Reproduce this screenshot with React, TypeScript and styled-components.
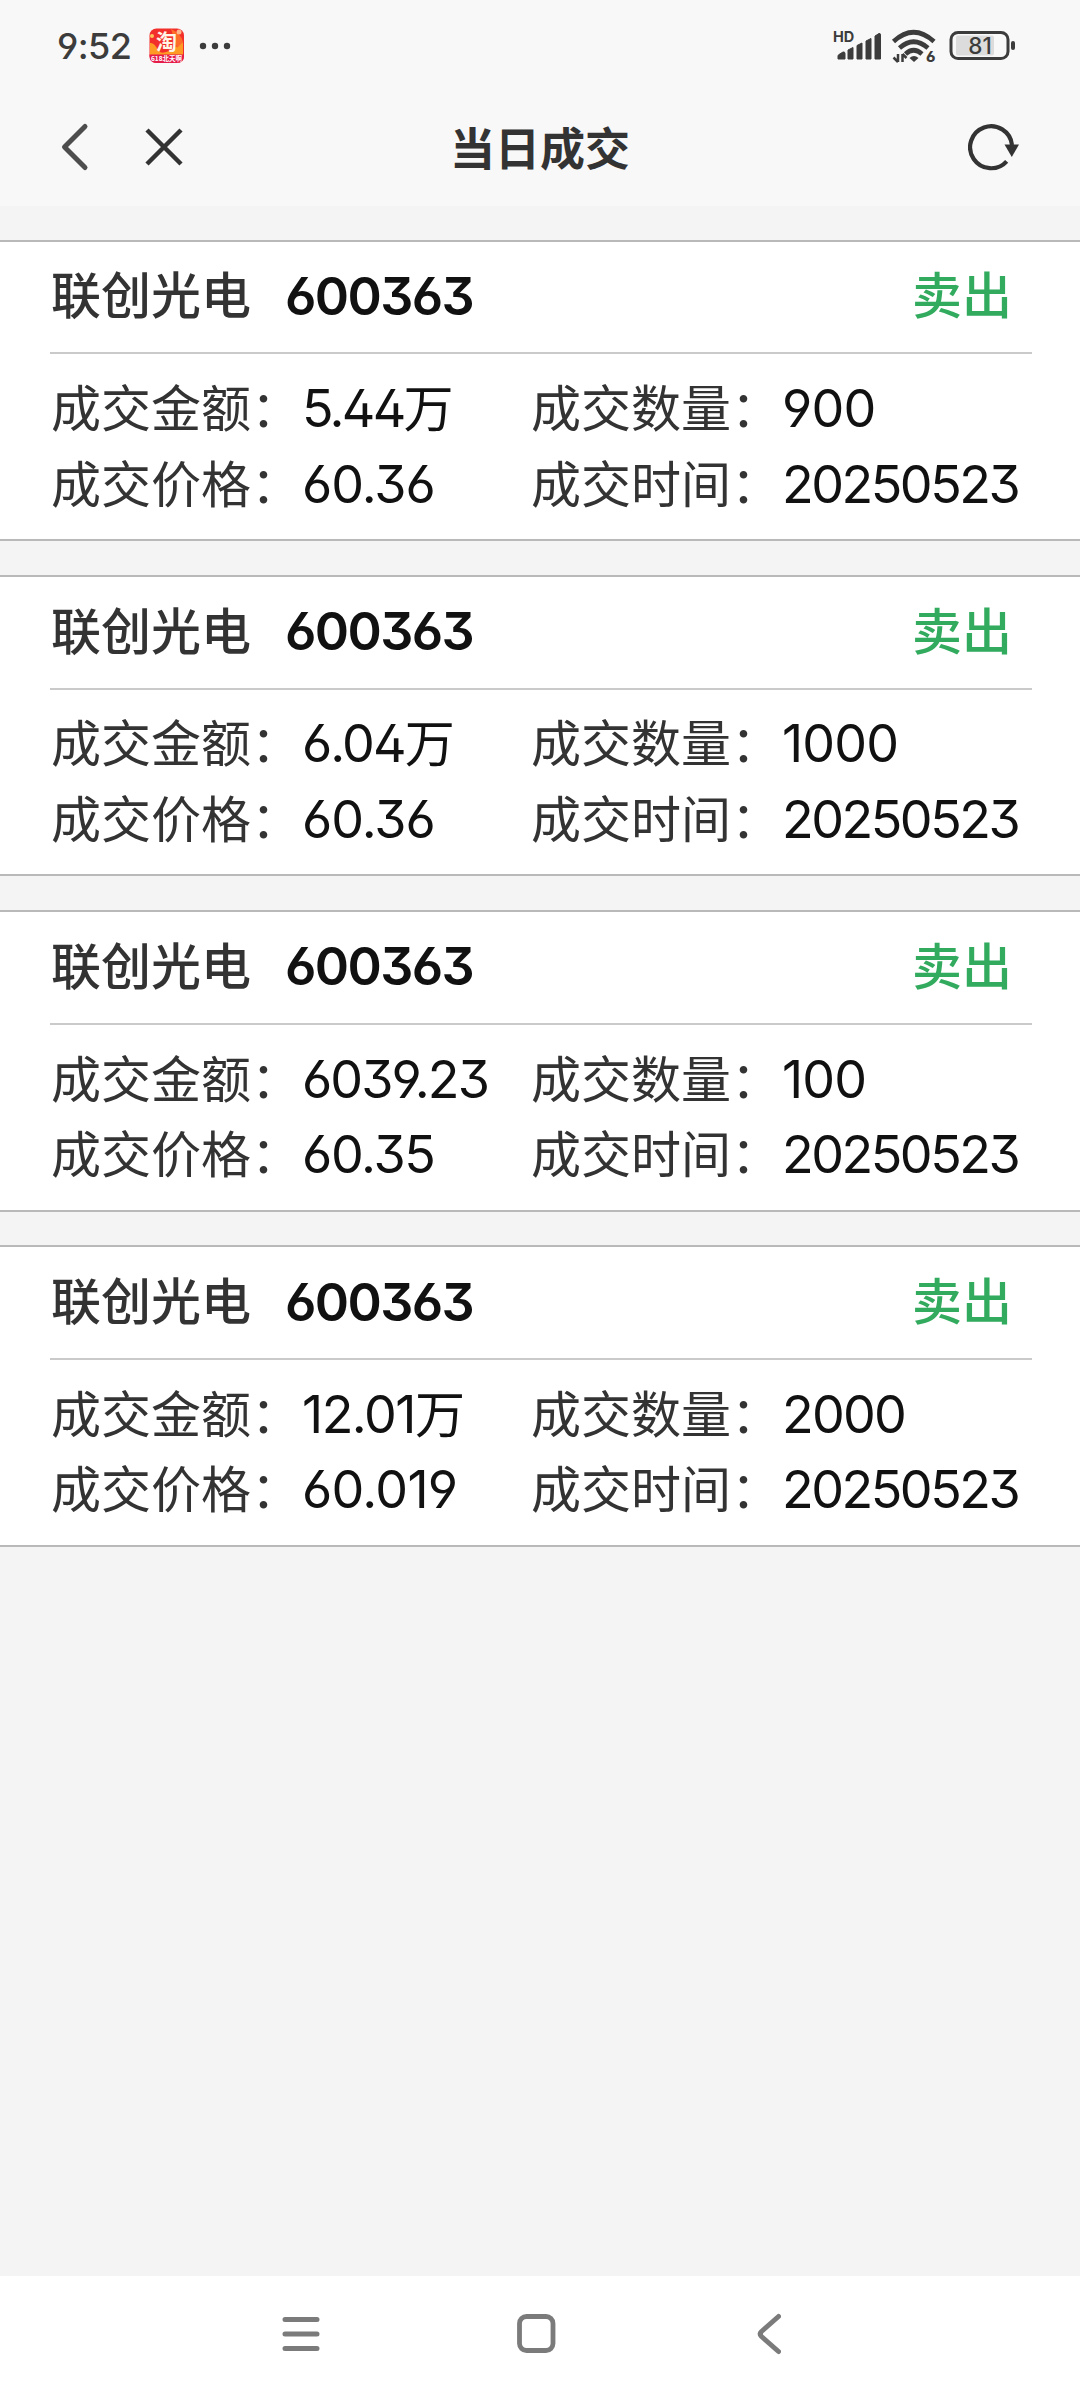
import React from "react";
import styled, { createGlobalStyle } from "styled-components";

const CJK = '"Noto Sans CJK SC", sans-serif';

const GlobalStyle = createGlobalStyle`
  * { box-sizing: border-box; }
  body { margin: 0; background: #f4f4f4; font-family: Inter, ${CJK}; }
`;

const Screen = styled.div`
  width: 1080px;
  height: 2400px;
  display: flex;
  flex-direction: column;
  background: #f4f4f4;
  overflow: hidden;
`;

const StatusBar = styled.div`
  height: 92px;
  padding: 0 64px 0 57px;
  display: flex;
  align-items: center;
  justify-content: space-between;
  background: #f8f8f8;
  color: #3c3c3c;
`;

const StatusGroup = styled.div`
  display: flex;
  align-items: center;
`;

const Clock = styled.span`
  width: 76px;
  font: 500 36px/44px Inter, sans-serif;
  font-feature-settings: "cv04", "ss01";
  letter-spacing: -0.6px;
  white-space: nowrap;
`;

const AppBadge = styled.svg`
  display: block;
  margin-left: 16px;
  overflow: visible;
`;

const Dots = styled.svg`
  display: block;
  margin-left: 14px;
`;

const Signals = styled.svg`
  display: block;
  overflow: visible;
  font-feature-settings: "cv03", "ss01";
`;

const TitleBar = styled.div`
  height: 113.6px;
  padding: 0 56px 3px 54px;
  display: grid;
  grid-template-columns: 1fr auto 1fr;
  align-items: center;
  background: #f8f8f8;
`;

const Actions = styled.div<{ $end?: boolean }>`
  display: flex;
  align-items: center;
  justify-content: ${(p) => (p.$end ? "flex-end" : "flex-start")};
  gap: 50px;
`;

const Title = styled.h1`
  margin: 0;
  padding-left: 2px;
  font: 700 45px/60px ${CJK};
  color: #333;
`;

const List = styled.main`
  flex: 1;
  padding-top: 34px;
  display: flex;
  flex-direction: column;
  gap: 33.5px;
`;

const Card = styled.section`
  height: 301.7px;
  padding: 0 48px 0 50px;
  border-top: 2px solid #b9b9b9;
  border-bottom: 2px solid #b9b9b9;
  background: #fff;
`;

const CardHead = styled.header`
  height: 112.8px;
  padding: 0 20px 0 1px;
  display: flex;
  align-items: center;
  border-bottom: 2px solid #cacaca;
`;

const StockName = styled.span`
  width: 234px;
  padding-bottom: 9px;
  font: 500 50px/72px ${CJK};
  color: #333;
`;

const digits = `
  font-feature-settings: "cv03", "cv04", "cv09", "ss01";
  color: #111;
  white-space: nowrap;
`;

const StockCode = styled.span`
  font: 600 52px/72px Inter, ${CJK};
  letter-spacing: -1.6px;
  ${digits}
`;

const Side = styled.span`
  margin-left: auto;
  padding-bottom: 9px;
  font: 500 50px/72px ${CJK};
  color: #33ab5f;
`;

const Fields = styled.div`
  padding: 17px 0 0 1px;
  display: grid;
  grid-template-columns: 480px 1fr;
  grid-auto-rows: 75.5px;
  align-items: center;
`;

const Field = styled.div`
  display: flex;
  align-items: center;
  height: 72px;
`;

const Label = styled.span`
  width: 251px;
  padding-bottom: 8px;
  font: 400 50px/72px ${CJK};
  color: #333;
  white-space: nowrap;
`;

const Value = styled.span<{ $tracking: number }>`
  display: flex;
  align-items: center;
  font: 400 52px/72px Inter, ${CJK};
  letter-spacing: ${(p) => p.$tracking}px;
  ${digits}
`;

const Unit = styled.span`
  padding-bottom: 8px;
  font: 400 50px/72px ${CJK};
`;

const NavBar = styled.nav`
  height: 124px;
  padding: 0 299px 8px 280px;
  display: flex;
  align-items: center;
  justify-content: space-between;
  background: #fff;
`;

interface Figure {
  text: string;
  unit?: string;
  tracking: number;
}

interface Deal {
  amount: Figure;
  count: Figure;
  price: Figure;
}

const deals: Deal[] = [
  {
    amount: { text: "5.44", unit: "万", tracking: -2.7 },
    count: { text: "900", tracking: -0.8 },
    price: { text: "60.36", tracking: -1 },
  },
  {
    amount: { text: "6.04", unit: "万", tracking: -1.9 },
    count: { text: "1000", tracking: -0.8 },
    price: { text: "60.36", tracking: -1 },
  },
  {
    amount: { text: "6039.23", tracking: -1.9 },
    count: { text: "100", tracking: -0.8 },
    price: { text: "60.35", tracking: -1.3 },
  },
  {
    amount: { text: "12.01", unit: "万", tracking: -1.5 },
    count: { text: "2000", tracking: -1.8 },
    price: { text: "60.019", tracking: -0.7 },
  },
];

const tradeDate: Figure = { text: "20250523", tracking: -2.5 };

const DealField = ({ label, figure }: { label: string; figure: Figure }) => (
  <Field>
    <Label>{label}：</Label>
    <Value $tracking={figure.tracking}>
      {figure.text}
      {figure.unit && <Unit>{figure.unit}</Unit>}
    </Value>
  </Field>
);

const DealCard = ({ deal }: { deal: Deal }) => (
  <Card>
    <CardHead>
      <StockName>联创光电</StockName>
      <StockCode>600363</StockCode>
      <Side>卖出</Side>
    </CardHead>
    <Fields>
      <DealField label="成交金额" figure={deal.amount} />
      <DealField label="成交数量" figure={deal.count} />
      <DealField label="成交价格" figure={deal.price} />
      <DealField label="成交时间" figure={tradeDate} />
    </Fields>
  </Card>
);

const StatusIcons = () => (
  <Signals width="184" height="36" viewBox="832 28 184 36" fill="#3c3c3c">
    <text x="833" y="42" fontFamily="Inter, sans-serif" fontWeight="700" fontSize="14.5">HD</text>
    <path d="M838 59v-3q0-1 1-1.500l4-2.500q2-.5 2 1.500V59zM848 59V50l5-2.500V59zM857 59V45.500l5-2.500V59zM866 59V41l5-2.500V59zM875 59V36l4-2.500q1.500-.5 1.500 1.500V59z" strokeWidth="1" stroke="#3c3c3c" strokeLinejoin="round" />
    <g fill="none" stroke="#3c3c3c" strokeWidth="4.600">
      <path d="M893.500 41.500Q913.500 23 934 41.500" />
      <path d="M899.500 48Q913.500 35.500 928 48" />
      <path d="M905.500 54Q913.500 46.500 922 54" />
    </g>
    <path d="M909.500 58Q914 54 918.500 58L914 62z" />
    <path d="M898 54v8M898 62l-4.500-4.500M902.500 62v-8M902.500 54l4 4" fill="none" stroke="#3c3c3c" strokeWidth="2.500" />
    <text x="926" y="61.800" fontFamily="Inter, sans-serif" fontWeight="800" fontSize="15">6</text>
    <rect x="956" y="35.500" width="38" height="20" rx="2" fill="#dcdcdc" />
    <rect x="951" y="32.500" width="57" height="26" rx="7" fill="none" stroke="#3c3c3c" strokeWidth="3" />
    <rect x="1011" y="41" width="4" height="9" rx="2" />
    <text x="980" y="53.800" textAnchor="middle" fontFamily="Inter, sans-serif" fontWeight="500" fontSize="22.500">81</text>
  </Signals>
);

export default function App() {
  return (
    <Screen>
      <GlobalStyle />
      <StatusBar>
        <StatusGroup>
          <Clock>9:52</Clock>
          <AppBadge width="36" height="36" viewBox="0 0 36 36">
            <rect x="0.500" y="0.500" width="34.500" height="34.500" rx="7" fill="#f22f2b" />
            <path d="M1 15Q5 14 9 22T34 14V27H1z" fill="#ff9a24" />
            <path d="M22 1Q32 5 34 14L28 20z" fill="#ff6b28" />
            <path d="M.5 26.500H35V28q0 7-7 7H7.500q-7 0-7-7z" fill="#e51b4a" />
            <circle cx="30" cy="4" r="2.500" fill="#ffb48a" />
            <circle cx="3" cy="8" r="2" fill="#ffc35b" />
            <text x="17.500" y="21" textAnchor="middle" fontFamily={CJK} fontWeight="700" fontSize="21" fill="#fff6e8">淘</text>
            <text x="17.500" y="32.800" textAnchor="middle" fontFamily={CJK} fontWeight="700" fontSize="6.500" fill="#fff">618北天啊</text>
          </AppBadge>
          <Dots width="32" height="8" viewBox="0 0 32 8" fill="#3c3c3c">
            <circle cx="4" cy="4" r="3.200" />
            <circle cx="16" cy="4" r="3.200" />
            <circle cx="28" cy="4" r="3.200" />
          </Dots>
        </StatusGroup>
        <StatusIcons />
      </StatusBar>
      <TitleBar>
        <Actions>
          <svg width="40" height="50" viewBox="0 0 40 50" fill="none" stroke="#4d4d4d" strokeWidth="5" strokeLinecap="round" strokeLinejoin="round">
            <path d="M31 4.500L10.500 25L31 45.500" />
          </svg>
          <svg width="40" height="40" viewBox="0 0 40 40" fill="none" stroke="#333" strokeWidth="4.500">
            <path d="M3 3L37 37M37 3L3 37" />
          </svg>
        </Actions>
        <Title>当日成交</Title>
        <Actions $end>
          <svg width="56" height="50" viewBox="0 0 56 50">
            <path d="M38.700 39.300A21 21 0 1 1 44 23" fill="none" stroke="#333" strokeWidth="4.200" />
            <path d="M36.500 22.500H51L43.800 35z" fill="#333" />
          </svg>
        </Actions>
      </TitleBar>
      <List>
        {deals.map((deal, i) => (
          <DealCard key={i} deal={deal} />
        ))}
      </List>
      <NavBar>
        <svg width="42" height="42" viewBox="0 0 42 42" stroke="#7b7b7b" strokeWidth="5" strokeLinecap="round">
          <path d="M5 6.500H37M5 21H37M5 35.500H37" />
        </svg>
        <svg width="42" height="42" viewBox="0 0 42 42" fill="none" stroke="#7b7b7b" strokeWidth="4.800">
          <rect x="2.500" y="3.500" width="33.500" height="34" rx="7" />
        </svg>
        <svg width="28" height="42" viewBox="0 0 28 42" fill="none" stroke="#7b7b7b" strokeWidth="5" strokeLinecap="round" strokeLinejoin="round">
          <path d="M25.500 3.500L8.500 18.500Q6 21 8.500 23.500L25.500 38.500" />
        </svg>
      </NavBar>
    </Screen>
  );
}
